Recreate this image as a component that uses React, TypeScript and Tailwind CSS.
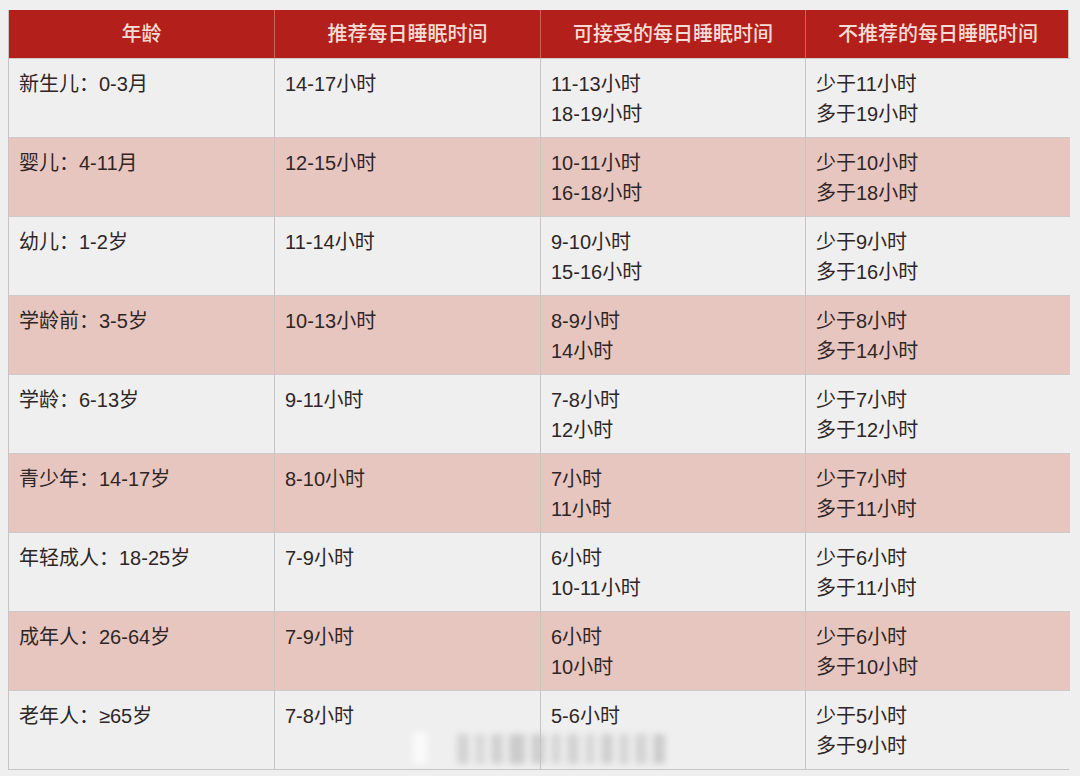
import React from 'react';

const rows: { age: string; rec: string; ok: string[]; bad: string[] }[] = [
  { age: '新生儿：0-3月', rec: '14-17小时', ok: ['11-13小时', '18-19小时'], bad: ['少于11小时', '多于19小时'] },
  { age: '婴儿：4-11月', rec: '12-15小时', ok: ['10-11小时', '16-18小时'], bad: ['少于10小时', '多于18小时'] },
  { age: '幼儿：1-2岁', rec: '11-14小时', ok: ['9-10小时', '15-16小时'], bad: ['少于9小时', '多于16小时'] },
  { age: '学龄前：3-5岁', rec: '10-13小时', ok: ['8-9小时', '14小时'], bad: ['少于8小时', '多于14小时'] },
  { age: '学龄：6-13岁', rec: '9-11小时', ok: ['7-8小时', '12小时'], bad: ['少于7小时', '多于12小时'] },
  { age: '青少年：14-17岁', rec: '8-10小时', ok: ['7小时', '11小时'], bad: ['少于7小时', '多于11小时'] },
  { age: '年轻成人：18-25岁', rec: '7-9小时', ok: ['6小时', '10-11小时'], bad: ['少于6小时', '多于11小时'] },
  { age: '成年人：26-64岁', rec: '7-9小时', ok: ['6小时', '10小时'], bad: ['少于6小时', '多于10小时'] },
  { age: '老年人：≥65岁', rec: '7-8小时', ok: ['5-6小时'], bad: ['少于5小时', '多于9小时'] },
];

const headers = ['年龄', '推荐每日睡眠时间', '可接受的每日睡眠时间', '不推荐的每日睡眠时间'];

const Cell: React.FC<{ lines: string[]; pink: boolean; last?: boolean }> = ({ lines, pink, last }) => (
  <div
    className={
      'h-[79px] pl-[10px] pt-[10px] leading-[30px] border-t border-[#cfcaca] ' +
      (last ? '' : 'border-r border-r-[#c9c4c4] ') +
      (pink ? 'bg-[#e8c6c0]' : 'bg-[#efefef]')
    }
  >
    {lines.map((l) => (
      <div key={l}>{l}</div>
    ))}
  </div>
);

export default function App() {
  return (
    <div
      className="relative w-[1080px] h-[776px] bg-[#efefef] pt-[10px] pl-[8px] text-[#2e2626]"
      style={{ fontFamily: '"Liberation Sans", "Noto Sans CJK SC", sans-serif' }}
    >
      <div className="w-[1061px] border-b border-r border-l border-[#c9c4c4] text-[20px]">
        <div className="grid grid-cols-[266px_266px_265px_264px] bg-[#b3201c] h-[48px]">
          {headers.map((h, i) => (
            <div
              key={h}
              className={
                'flex items-center justify-center text-[20px] font-medium text-[#f7dcd5] ' +
                (i < 3 ? 'border-r border-[#d0605a]' : '')
              }
            >
              {h}
            </div>
          ))}
        </div>
        {rows.map((r, i) => {
          const pink = i % 2 === 1;
          return (
            <div key={r.age} className="grid grid-cols-[266px_266px_265px_264px]">
              <Cell lines={[r.age]} pink={pink} />
              <Cell lines={[r.rec]} pink={pink} />
              <Cell lines={r.ok} pink={pink} />
              <Cell lines={r.bad} pink={pink} last />
            </div>
          );
        })}
      </div>

      {/* blurred watermark */}
      <div className="absolute left-[413px] top-[732px] flex gap-[6px] items-end blur-[3px] opacity-70">
        <div className="w-[14px] h-[32px] bg-white" />
        <div className="w-[18px] h-[32px] bg-transparent" />
        <div className="w-[12px] h-[30px] bg-[#c8c8c8]" />
        <div className="w-[10px] h-[30px] bg-[#cfcfcf]" />
        <div className="w-[12px] h-[30px] bg-[#c6c6c6]" />
        <div className="w-[16px] h-[30px] bg-[#bdbdbd]" />
        <div className="w-[14px] h-[30px] bg-[#c2c2c2]" />
        <div className="w-[10px] h-[30px] bg-[#cdcdcd]" />
        <div className="w-[12px] h-[30px] bg-[#c8c8c8]" />
        <div className="w-[10px] h-[30px] bg-[#cfcfcf]" />
        <div className="w-[12px] h-[30px] bg-[#c4c4c4]" />
        <div className="w-[10px] h-[30px] bg-[#cbcbcb]" />
        <div className="w-[12px] h-[30px] bg-[#c9c9c9]" />
        <div className="w-[12px] h-[30px] bg-[#bfbfbf]" />
      </div>
    </div>
  );
}
